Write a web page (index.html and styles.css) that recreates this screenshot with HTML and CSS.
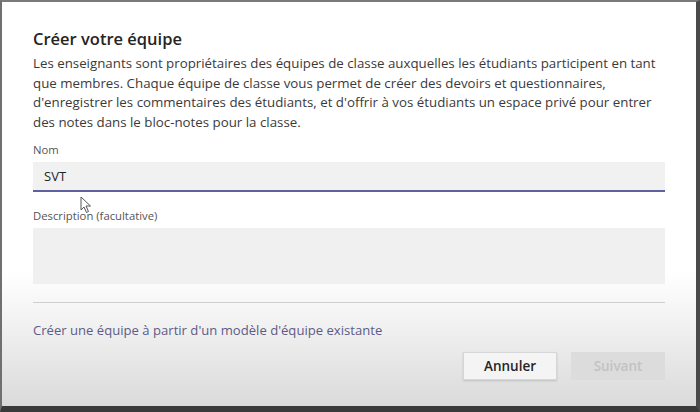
FILE: index.html
```html
<!DOCTYPE html>
<html lang="fr">
<head>
    <meta charset="UTF-8">
    <meta name="viewport" content="width=device-width, initial-scale=1.0">
    <title>Créer votre équipe</title>
    <link rel="stylesheet" href="styles.css">
</head>
<body>

<div class="dialog">
    <h1>Créer votre équipe</h1>
    <p class="intro">Les enseignants sont propriétaires des équipes de classe auxquelles les étudiants participent en tant<br>
    que membres. Chaque équipe de classe vous permet de créer des devoirs et questionnaires,<br>
    d'enregistrer les commentaires des étudiants, et d'offrir à vos étudiants un espace privé pour entrer<br>
    des notes dans le bloc-notes pour la classe.</p>

    <label class="field-label" for="nom">Nom</label>
    <div class="name-wrap">
        <input type="text" id="nom" class="name-input" value="SVT">
        <svg class="pointer" width="12" height="18" viewBox="0 0 12 18">
            <path d="M1 1 L1 14 L4 11 L6.5 16.5 L8.5 15.5 L6 10 L10.5 10 Z" fill="#fff" stroke="#555" stroke-width="1"/>
        </svg>
    </div>

    <label class="field-label desc-label" for="desc">Description (facultative)</label>
    <textarea id="desc" class="desc-input"></textarea>

    <div class="divider"></div>

    <a class="template-link" href="#">Créer une équipe à partir d'un modèle d'équipe existante</a>

    <div class="actions">
        <button class="btn btn-cancel">Annuler</button>
        <button class="btn btn-next" disabled>Suivant</button>
    </div>
</div>

</body>
</html>
```

FILE: styles.css
```css
html, body {
    margin: 0;
    height: 100%;
}
body {
    font-family: "Open Sans", "Noto Sans", Arial, sans-serif;
    background: #3d3d3d;
}
.dialog {
    box-sizing: border-box;
    width: 700px;
    height: 412px;
    border-left: 2px solid #707070;
    border-top: 2px solid #7a7a7a;
    border-right: 4px solid #4a4a4a;
    border-bottom: 6px solid #3a3a3a;
    padding: 24px 31px 0 31px;
    background: linear-gradient(to bottom, #ffffff 0, #ffffff 270px, #f2f2f2 320px, #dadada 404px);
    display: flex;
    flex-direction: column;
}
h1 {
    margin: 0;
    font-size: 16.5px;
    font-weight: 600;
    color: #252423;
    line-height: 26px;
}
.intro {
    margin: 2px 0 0 0;
    font-size: 13.3px;
    line-height: 19.7px;
    color: #3b3a39;
    white-space: nowrap;
}
.field-label {
    display: block;
    font-size: 11.3px;
    color: #555;
    line-height: 14px;
}
.field-label:first-of-type {
    margin-top: 10px;
}
.name-wrap {
    position: relative;
    margin-top: 5px;
}
.name-input {
    box-sizing: border-box;
    display: block;
    width: 100%;
    height: 30px;
    border: none;
    border-bottom: 2px solid #5f60a0;
    background: #f1f1f1;
    padding: 0 11px;
    font-family: inherit;
    font-size: 13px;
    color: #252423;
    outline: none;
}
.pointer {
    position: absolute;
    left: 47px;
    top: 34px;
}
.desc-label {
    margin-top: 17px;
}
.desc-input {
    box-sizing: border-box;
    display: block;
    width: 100%;
    height: 56px;
    margin-top: 5px;
    border: none;
    background: #f0f0f0;
    resize: none;
    outline: none;
}
.divider {
    height: 1px;
    background: #cfcfcf;
    margin-top: 18px;
}
.template-link {
    margin-top: 19px;
    font-size: 13.1px;
    line-height: 16px;
    color: #5d5b86;
    text-decoration: none;
}
.actions {
    display: flex;
    justify-content: flex-end;
    gap: 14px;
    margin-top: 14px;
}
.btn {
    width: 94px;
    height: 28px;
    font-family: inherit;
    font-size: 13.5px;
    font-weight: 600;
    border: 1px solid #d6d6d6;
}
.btn-cancel {
    background: #f4f4f4;
    color: #252423;
    box-shadow: 0 1px 2px rgba(0, 0, 0, 0.15);
}
.btn-next {
    background: #dcdcdc;
    border-color: #dcdcdc;
    color: #c2c2c2;
}
```
